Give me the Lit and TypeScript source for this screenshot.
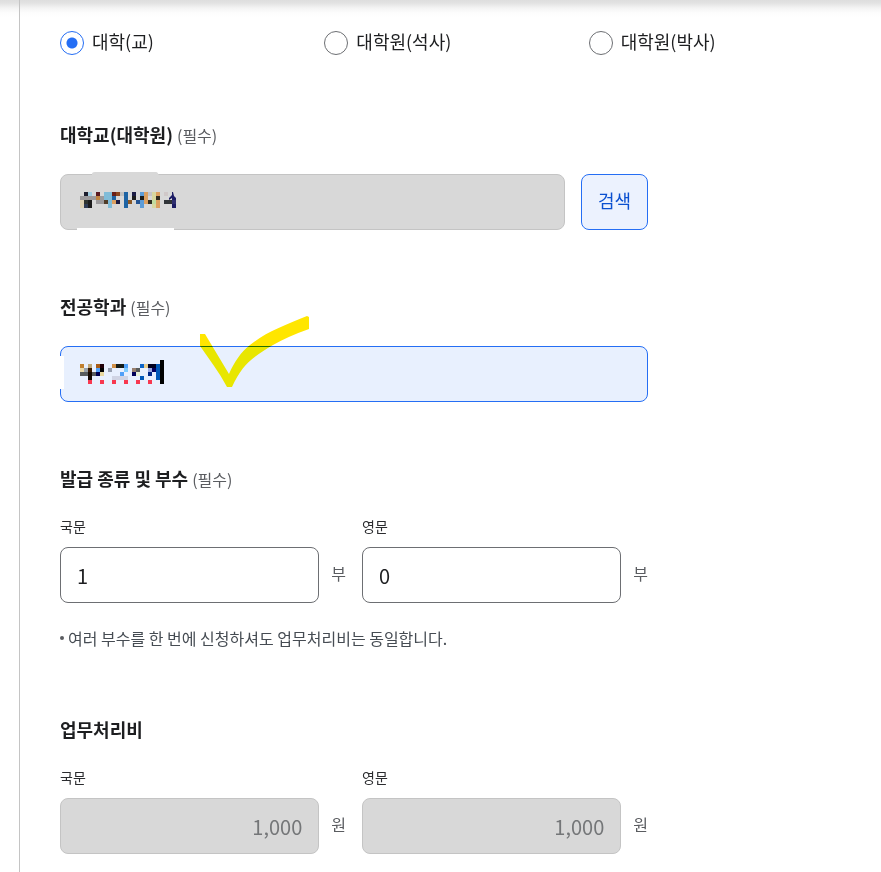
import { LitElement, html, css, svg } from "lit";
import { customElement, property, state } from "lit/decorators.js";

type Cell = [col: number, row: number, width: number, height: number, fill: string];

const SCHOOL_CELLS: Cell[] = [
  [1, 0, 1, 1, "#1c1c2c"], [2, 0, 1, 1, "#a0cce0"], [4, 0, 1, 1, "#5a1a20"],
  [6, 0, 2, 1, "#80bcd8"], [8, 0, 1, 1, "#6a2018"],
  [9, 0, 1, 1, "#8c4820"], [10, 0, 1, 1, "#c0c0c0"], [11, 0, 1, 4, "#1e64a4"],
  [13, 0, 1, 1, "#1c1c44"], [15, 0, 1, 1, "#5c9cd8"], [16, 0, 1, 3, "#dca060"],
  [17, 0, 1, 1, "#c4c4c8"], [18, 0, 1, 2, "#d8d8a0"], [19, 0, 1, 1, "#dca060"],
  [21, 0, 1, 1, "#d0c8c8"],
  [0, 1, 4, 1, "#9c9a9c"], [4, 1, 1, 1, "#c08440"], [5, 1, 1, 1, "#9c9a9c"],
  [6, 1, 2, 1, "#80bcd8"], [8, 1, 1, 1, "#1e64a4"], [13, 1, 1, 1, "#1c1c1c"],
  [15, 1, 1, 1, "#1c1c1c"], [19, 1, 1, 1, "#302c20"],
  [0, 2, 1, 2, "#dcd0b4"], [1, 2, 1, 1, "#303430"], [2, 2, 1, 2, "#1c1c1c"],
  [4, 2, 2, 1, "#9c9a9c"], [6, 2, 1, 1, "#503c28"], [7, 2, 1, 2, "#80bcd8"],
  [8, 2, 1, 1, "#dca060"], [9, 2, 1, 1, "#1c1c44"], [12, 2, 1, 1, "#8c5824"],
  [14, 2, 1, 1, "#245494"], [15, 2, 1, 2, "#5c9cd8"], [17, 2, 1, 1, "#302c20"],
  [18, 2, 1, 1, "#c0dca0"], [19, 2, 1, 2, "#dca060"], [21, 2, 2, 1, "#303438"],
  [23, 2, 1, 1, "#303070"],
  [1, 3, 1, 1, "#303c54"], [18, 3, 1, 1, "#d8d8a0"], [23, 3, 1, 1, "#1c1c64"],
];

const MAJOR_CELLS: Cell[] = [
  [0, 1, 1, 1, "#c08030"], [2, 1, 1, 1, "#c0a878"], [4, 1, 1, 1, "#a85c18"],
  [5, 1, 1, 1, "#200008"], [8, 1, 1, 1, "#d09048"], [9, 1, 2, 1, "#141c18"],
  [11, 1, 1, 1, "#50a0f8"], [15, 1, 1, 1, "#0c64c8"], [16, 1, 1, 1, "#e4cc90"],
  [17, 1, 2, 1, "#000020"], [19, 1, 1, 4, "#0058b8"],
  [0, 2, 1, 1, "#e8d8a8"], [1, 2, 1, 1, "#98a0a8"], [2, 2, 1, 1, "#381800"],
  [4, 2, 1, 1, "#50a0f8"], [5, 2, 1, 1, "#000000"], [7, 2, 1, 1, "#98a0b0"],
  [11, 2, 1, 1, "#80ccff"], [13, 2, 1, 1, "#988070"], [14, 2, 1, 1, "#585c5c"],
  [17, 2, 1, 1, "#98a8e0"], [18, 2, 1, 1, "#000060"],
  [0, 3, 2, 1, "#585c5c"], [2, 3, 1, 2, "#140800"], [3, 3, 1, 1, "#585c5c"],
  [4, 3, 1, 1, "#000050"], [5, 3, 1, 1, "#e8d8a0"], [10, 3, 1, 1, "#50a0f8"],
  [13, 3, 1, 1, "#000058"], [14, 3, 1, 1, "#e8f0d8"], [17, 3, 1, 1, "#002888"],
  [8, 4, 4, 1, "#d0d4e4"], [15, 4, 1, 1, "#0058b8"],
  [2, 5, 1, 1, "#f83850"], [5, 5, 1, 1, "#f83850"], [8, 5, 1, 1, "#f83850"],
  [11, 5, 1, 1, "#f83850"], [14, 5, 1, 1, "#f83850"], [17, 5, 1, 1, "#f83850"],
  [20, 0, 1, 6, "#000000"],
];

const drawCells = (cells: Cell[]) =>
  cells.map(([x, y, w, h, fill]) => svg`<rect x=${x} y=${y} width=${w} height=${h} fill=${fill}></rect>`);

const base = css`
  * {
    box-sizing: border-box;
  }
  input,
  button {
    font-family: inherit;
    margin: 0;
  }
  .box {
    display: block;
    flex: 1;
    width: 100%;
    min-width: 0;
    height: 56px;
    padding: 0 16px;
    border: 1px solid #6d6f73;
    border-radius: 8px;
    background: #fff;
    color: #1d1e20;
    font-size: 20px;
    outline: none;
  }
  .box.locked {
    border-color: #c4c4c4;
    background: #d8d8d8;
    color: #747678;
  }
`;

@customElement("form-section")
class FormSection extends LitElement {
  @property() heading = "";
  @property({ type: Boolean }) required = false;

  static styles = css`
    :host {
      display: block;
    }
    .heading {
      margin: 0 0 28px;
      font-size: 18px;
      line-height: 24px;
      font-weight: 700;
      color: #1d1e20;
    }
    .mark {
      margin-left: 4px;
      font-size: 16px;
      line-height: 16px;
      font-weight: 400;
      color: #5a5c60;
    }
  `;

  render() {
    return html`
      <h2 class="heading">${this.heading}${this.required ? html`<span class="mark">(필수)</span>` : null}</h2>
      <slot></slot>
    `;
  }
}

@customElement("amount-field")
class AmountField extends LitElement {
  @property() label = "";
  @property() value = "";
  @property() unit = "";
  @property({ type: Boolean }) locked = false;

  static styles = [
    base,
    css`
      :host {
        display: block;
        min-width: 0;
      }
      .label {
        display: block;
        margin-bottom: 12px;
        font-size: 14px;
        line-height: 17px;
        color: #2b2c2f;
      }
      .row {
        display: flex;
        align-items: center;
        gap: 12px;
      }
      .unit {
        padding-bottom: 4px;
        font-size: 16px;
        line-height: 24px;
        color: #5a5c60;
      }
      .locked {
        text-align: right;
      }
    `,
  ];

  render() {
    return html`
      <label class="label" for="amount">${this.label}</label>
      <div class="row">
        <input id="amount" class="box ${this.locked ? "locked" : ""}" type="text" inputmode="numeric"
          .value=${this.value} ?readonly=${this.locked} />
        <span class="unit">${this.unit}</span>
      </div>
    `;
  }
}

@customElement("app-root")
class AppRoot extends LitElement {
  @state() private level = 0;

  static styles = [
    base,
    css`
      :host {
        display: block;
        min-height: 100vh;
        padding-left: 19px;
        background: linear-gradient(#dedede, #e2e2e2 3px, #f4f4f4 8px, #fdfdfd 13px, #fff 18px) no-repeat #fff;
        font-family: "Noto Sans CJK KR", sans-serif;
      }
      .form {
        min-height: 100vh;
        padding: 28px 28px 18px 40px;
        border-left: 1px solid #c4c4c4;
      }
      .levels {
        display: grid;
        grid-template-columns: repeat(3, 1fr);
        margin: 0 0 64px;
        padding: 0;
        border: 0;
      }
      .level {
        display: flex;
        align-items: center;
        gap: 8px;
        font-size: 18px;
        line-height: 26px;
        color: #1d1e20;
      }
      .level-name {
        padding-bottom: 4px;
      }
      .radio {
        appearance: none;
        width: 24px;
        height: 24px;
        border: 1px solid #6d6f73;
        border-radius: 50%;
        background: #fff;
      }
      .radio:checked {
        border-color: #256ef4;
        background: radial-gradient(circle, #256ef4 5px, #fff 6px);
      }
      .sections {
        display: grid;
        gap: 64px;
        max-width: 588px;
      }
      .search-row {
        display: flex;
        gap: 16px;
      }
      .field {
        position: relative;
        flex: 1;
        min-width: 0;
      }
      .search {
        padding: 0 16px 4px;
        border: 1px solid #256ef4;
        border-radius: 8px;
        background: #ecf2fe;
        color: #0b50d0;
        font-size: 18px;
      }
      .active {
        border-color: #256ef4;
        background: #e8f0fe;
      }
      .overlay {
        position: absolute;
        left: 0;
        top: -30px;
        pointer-events: none;
        mix-blend-mode: darken;
      }
      .patches {
        position: absolute;
        left: 0;
        top: -2px;
        pointer-events: none;
      }
      .pair {
        display: grid;
        grid-template-columns: 1fr 1fr;
        gap: 16px;
      }
      .note {
        display: flex;
        align-items: center;
        gap: 4px;
        margin: 24px 0 0;
        padding-bottom: 4px;
        font-size: 16px;
        line-height: 22px;
        color: #464c53;
      }
      .note::before {
        content: "";
        width: 4px;
        height: 4px;
        border-radius: 50%;
        background: #5a5c60;
      }
    `,
  ];

  render() {
    return html`
      <form class="form" @submit=${(e: Event) => e.preventDefault()}>
        <fieldset class="levels">
          ${["대학(교)", "대학원(석사)", "대학원(박사)"].map(
            (name, i) => html`
              <label class="level">
                <input class="radio" type="radio" name="level" .checked=${this.level === i}
                  @change=${() => (this.level = i)} />
                <span class="level-name">${name}</span>
              </label>
            `,
          )}
        </fieldset>
        <div class="sections">
          <form-section heading="대학교(대학원)" required>
            <div class="search-row">
              <div class="field">
                <input class="box locked" type="text" aria-label="대학교(대학원)" readonly />
                <svg class="patches" width="130" height="60" aria-hidden="true">
                  <path d="M32 4V2Q32 0 35 0H96Q98 0 99 4Z" fill="#d8d8d8"></path>
                  <rect x="17" y="56" width="97" height="4" fill="#fff"></rect>
                  <g transform="translate(20 20) scale(4)" shape-rendering="crispEdges">
                    ${drawCells(SCHOOL_CELLS)}
                  </g>
                  <path d="M112 20L113 20L114 24L116 26V28H112V26L109 28V26L112 23Z" fill="#1c1c64"></path>
                </svg>
              </div>
              <button class="search" type="button">검색</button>
            </div>
          </form-section>

          <form-section heading="전공학과" required>
            <div class="field">
              <input class="box active" type="text" aria-label="전공학과" />
              <svg class="patches" width="130" height="60" aria-hidden="true">
                <rect x="0" y="12" width="4" height="33" fill="#fff"></rect>
                <g transform="translate(20 16) scale(4)" shape-rendering="crispEdges">
                  ${drawCells(MAJOR_CELLS)}
                </g>
              </svg>
              <svg class="overlay" width="260" height="74" aria-hidden="true">
                <path fill="#ffe600"
                  d="M140 18H145L169 58C174 46 181 36 190 29C206 16 225 9 247 0L249 1V13Q229 20 213 29C191 42 182 49 172 71H167C159 56 149 43 140 30Z"></path>
              </svg>
            </div>
          </form-section>

          <form-section heading="발급 종류 및 부수" required>
            <div class="pair">
              <amount-field label="국문" value="1" unit="부"></amount-field>
              <amount-field label="영문" value="0" unit="부"></amount-field>
            </div>
            <p class="note">여러 부수를 한 번에 신청하셔도 업무처리비는 동일합니다.</p>
          </form-section>

          <form-section heading="업무처리비">
            <div class="pair">
              <amount-field label="국문" value="1,000" unit="원" locked></amount-field>
              <amount-field label="영문" value="1,000" unit="원" locked></amount-field>
            </div>
          </form-section>
        </div>
      </form>
    `;
  }
}
